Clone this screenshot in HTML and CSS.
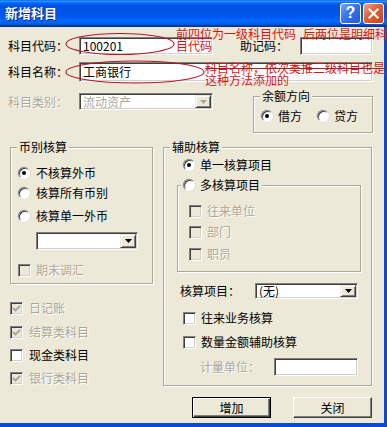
FILE: index.html
```html
<!DOCTYPE html>
<html>
<head>
<meta charset="utf-8">
<link rel="stylesheet" href="styles.css">
</head>
<body>
<div class="window">
  <div class="titlebar">
    <span class="title">新增科目</span>
    <span class="tb-btn help">?</span>
    <span class="tb-btn close"><svg width="13" height="13" viewBox="0 0 13 13"><path d="M2.5 2.5 L10.5 10.5 M10.5 2.5 L2.5 10.5" stroke="#fff" stroke-width="2.2" stroke-linecap="square"/></svg></span>
  </div>
  <div class="client">
    <div class="row r1">
      <span class="lbl">科目代码：</span>
      <span class="field f-code">100201</span>
      <span class="lbl lbl-memo">助记码：</span>
      <span class="field f-memo"></span>
    </div>
    <div class="row r2">
      <span class="lbl">科目名称：</span>
      <span class="field f-name">工商银行</span>
    </div>
    <div class="r3">
      <div class="row r3-left">
        <span class="lbl dis">科目类别：</span>
        <span class="field combo f-type"><span class="dis-plain">流动资产</span><span class="drop"><svg width="7" height="4" viewBox="0 0 7 4"><polygon points="0,0 7,0 3.5,4" fill="#ACA899"/></svg></span></span>
      </div>
      <fieldset class="group g-balance">
        <legend>余额方向</legend>
        <div class="row bal-radios">
          <span class="radio checked"></span><span class="gap5">借方</span>
          <span class="radio r-credit"></span><span class="gap5">贷方</span>
        </div>
      </fieldset>
    </div>
    <div class="main">
      <div class="col-left">
        <fieldset class="group g-currency">
          <legend>币别核算</legend>
          <div class="row opt c1"><span class="radio checked"></span><span class="gap6">不核算外币</span></div>
          <div class="row opt c2"><span class="radio"></span><span class="gap6">核算所有币别</span></div>
          <div class="row opt c3"><span class="radio"></span><span class="gap6">核算单一外币</span></div>
          <span class="field combo f-cur"><span></span><span class="drop"><svg width="7" height="4" viewBox="0 0 7 4"><polygon points="0,0 7,0 3.5,4" fill="#000"/></svg></span></span>
          <div class="row opt c4"><span class="chk off"></span><span class="dis gap5">期末调汇</span></div>
        </fieldset>
        <div class="row ck l1"><span class="chk off"><svg width="9" height="9" viewBox="0 0 9 9"><polyline points="1,4 3.5,6.5 8,2" fill="none" stroke="#A6A392" stroke-width="1.8"/></svg></span><span class="dis gap6">日记账</span></div>
        <div class="row ck l2"><span class="chk off"><svg width="9" height="9" viewBox="0 0 9 9"><polyline points="1,4 3.5,6.5 8,2" fill="none" stroke="#A6A392" stroke-width="1.8"/></svg></span><span class="dis gap6">结算类科目</span></div>
        <div class="row ck l3"><span class="chk"></span><span class="gap6">现金类科目</span></div>
        <div class="row ck l3"><span class="chk off"><svg width="9" height="9" viewBox="0 0 9 9"><polyline points="1,4 3.5,6.5 8,2" fill="none" stroke="#A6A392" stroke-width="1.8"/></svg></span><span class="dis gap6">银行类科目</span></div>
      </div>
      <div class="col-right">
        <fieldset class="group g-aux">
          <legend>辅助核算</legend>
          <div class="row opt a-single"><span class="radio checked"></span><span class="gap5">单一核算项目</span></div>
          <fieldset class="group g-multi">
            <legend><span class="radio"></span><span class="gap5">多核算项目</span></legend>
            <div class="row ck m1"><span class="chk off"></span><span class="dis gap5">往来单位</span></div>
            <div class="row ck m2"><span class="chk off"></span><span class="dis gap5">部门</span></div>
            <div class="row ck m3"><span class="chk off"></span><span class="dis gap5">职员</span></div>
          </fieldset>
          <div class="row item-row">
            <span class="lbl-item">核算项目：</span>
            <span class="field combo f-item"><span>(无)</span><span class="drop"><svg width="7" height="4" viewBox="0 0 7 4"><polygon points="0,0 7,0 3.5,4" fill="#000"/></svg></span></span>
          </div>
          <div class="row ck x1"><span class="chk"></span><span class="gap5">往来业务核算</span></div>
          <div class="row ck x2"><span class="chk"></span><span class="gap5">数量金额辅助核算</span></div>
          <div class="row unit-row">
            <span class="dis lbl-unit">计量单位：</span>
            <span class="field f-unit"></span>
          </div>
        </fieldset>
        <div class="btns">
          <span class="btn default">增加</span>
          <span class="btn">关闭</span>
        </div>
      </div>
    </div>
  </div>

  <svg class="marks" width="387" height="427" viewBox="0 0 387 427">
    <ellipse cx="120" cy="44" rx="54" ry="10.5" fill="none" stroke="#B3182A" stroke-width="1.1"/>
    <ellipse cx="135" cy="72" rx="69" ry="11" fill="none" stroke="#B3182A" stroke-width="1.1"/>
  </svg>
  <div class="annot a1"><span>前四位为一级科目代码</span><span class="sp">后两位是明细科</span><br>目代码</div>
  <div class="annot a2"><span class="strike">科目名称，依次类推三级科目也是</span><br>这种方法添加的</div>
</div>
</body>
</html>
```

FILE: styles.css
```css
* { box-sizing: border-box; }
body { margin: 0; background: #ECE9D8; }

.window {
  position: relative;
  width: 387px;
  height: 427px;
  overflow: hidden;
  background: #ECE9D8;
  display: flex;
  flex-direction: column;
  font-family: "Noto Sans CJK SC", sans-serif;
  font-size: 12px;
  line-height: 14px;
  color: #000;
}

.titlebar {
  flex: none;
  height: 27px;
  display: flex;
  align-items: center;
  padding: 0 3px 1px 5px;
  background: linear-gradient(180deg, #0058EE 0%, #3593FF 4%, #288EFF 6%, #127DFF 8%, #036FFC 10%, #0262EE 14%, #0057E5 20%, #0054E3 24%, #0055EB 56%, #005BF5 66%, #026AFE 76%, #0062EF 86%, #0052D6 92%, #0040AB 94%, #003092 100%);
}
.title {
  flex: 1;
  color: #fff;
  font-weight: bold;
  font-size: 13px;
  text-shadow: 1px 1px 0 #0a2780;
}
.tb-btn {
  width: 21px;
  height: 21px;
  margin-left: 2px;
  border: 1px solid #fff;
  border-radius: 3px;
  display: flex;
  align-items: center;
  justify-content: center;
}
.help {
  background: linear-gradient(135deg, #7AA8F8 0%, #3A78EE 40%, #1F5AD8 100%);
  color: #fff;
  font: bold 16px "Liberation Sans", sans-serif;
}
.close {
  background: linear-gradient(135deg, #F4A688 0%, #E2643A 40%, #C8421C 100%);
}

.client {
  flex: 1;
  padding-left: 8px;
  border-right: 3px solid #0A48D8;
  border-bottom: 4px solid #0A48D8;
}

.row { display: flex; align-items: center; }
.lbl { width: 71px; flex: none; white-space: nowrap; }
.dis { color: #ACA899; text-shadow: 1px 1px 0 #fff; white-space: nowrap; }
.dis-plain { color: #ACA899; }
.gap5 { margin-left: 5px; white-space: nowrap; }
.gap6 { margin-left: 6px; white-space: nowrap; }

.field {
  flex: none;
  height: 18px;
  background: #fff;
  border: 1px solid;
  border-color: #808080 #fff #fff #808080;
  box-shadow: inset 1px 1px 0 #404040, inset -1px -1px 0 #D4D0C8;
  padding-left: 3px;
  display: flex;
  align-items: center;
  white-space: nowrap;
  overflow: hidden;
}
.combo { justify-content: space-between; padding-right: 0; }
.drop {
  align-self: stretch;
  width: 16px;
  margin: 1px 1px 1px 0;
  background: #ECE9D8;
  border: 1px solid;
  border-color: #ECE9D8 #404040 #404040 #ECE9D8;
  box-shadow: inset 1px 1px 0 #fff, inset -1px -1px 0 #808080;
  display: flex;
  align-items: center;
  justify-content: center;
}

.r1 { margin-top: 10px; height: 18px; }
.f-code { width: 134px; }
.lbl-memo { width: 60px; margin-left: 27px; }
.f-memo { width: 73px; }

.r2 { margin-top: 7px; height: 20px; }
.f-name { width: 294px; height: 20px; }

.r3 { display: flex; align-items: flex-start; margin-top: 8px; }
.r3-left { margin-top: 3px; height: 17px; }
.f-type { width: 134px; height: 17px; }

.group {
  margin: 0;
  padding: 0;
  min-width: 0;
  border: 1px solid #ACA899;
  box-shadow: inset 1px 1px 0 #fff, 1px 1px 0 #fff;
}
.group legend {
  padding: 0 2px;
  height: 12px;
  line-height: 12px;
  background: #ECE9D8;
  white-space: nowrap;
}

.g-balance { margin-left: 40px; width: 120px; height: 43px; }
.g-balance legend { margin-left: 6px; }
.bal-radios { margin-top: 7px; margin-left: 7px; height: 14px; }
.r-credit { margin-left: 15px; }

.radio {
  flex: none;
  position: relative;
  width: 12px;
  height: 12px;
  border-radius: 50%;
  background: #fff;
  border: 1px solid;
  border-color: #808080 #fff #fff #808080;
  box-shadow: inset 1px 1px 0 #404040, 0 0 0 0.5px #D4D0C8;
}
.radio.checked::after {
  content: "";
  position: absolute;
  left: 3px;
  top: 3px;
  width: 4px;
  height: 4px;
  border-radius: 50%;
  background: #000;
}

.chk {
  flex: none;
  width: 13px;
  height: 13px;
  background: #fff;
  border: 1px solid;
  border-color: #808080 #fff #fff #808080;
  box-shadow: inset 1px 1px 0 #404040, inset -1px -1px 0 #D4D0C8;
  display: flex;
  align-items: center;
  justify-content: center;
}
.chk.off { background: #ECE9D8; }

.main { display: flex; margin-top: 8px; }

.col-left { width: 143px; margin-left: 2px; flex: none; display: flex; flex-direction: column; }
.g-currency { height: 143px; }
.g-currency legend { margin-left: 6px; }
.opt { height: 16px; }
.c1 { margin-top: 12px; margin-left: 7px; }
.c2 { margin-top: 4px; margin-left: 7px; }
.c3 { margin-top: 7px; margin-left: 7px; }
.f-cur { margin-top: 8px; margin-left: 25px; width: 102px; height: 18px; }
.c4 { margin-top: 12px; margin-left: 7px; }

.ck { height: 14px; }
.l1 { margin-top: 17px; }
.l2 { margin-top: 10px; }
.l3 { margin-top: 9px; }

.col-right { width: 209px; margin-left: 10px; flex: none; }
.g-aux { height: 245px; }
.g-aux > legend { margin-left: 6px; }
.a-single { margin-top: 4px; margin-left: 19px; }

.g-multi { margin-top: 5px; margin-left: 13px; width: 184px; height: 94px; }
.g-multi legend {
  display: flex;
  align-items: center;
  height: 14px;
  line-height: 14px;
  margin-left: 3px;
}
.m1 { margin-top: 12px; margin-left: 11px; }
.m2 { margin-top: 7px; margin-left: 11px; }
.m3 { margin-top: 8px; margin-left: 11px; }

.item-row { margin-top: 11px; margin-left: 16px; height: 16px; }
.lbl-item { width: 75px; white-space: nowrap; }
.f-item { width: 103px; height: 16px; }

.x1 { margin-top: 12px; margin-left: 19px; }
.x2 { margin-top: 10px; margin-left: 19px; }

.unit-row { margin-top: 9px; margin-left: 36px; height: 18px; }
.lbl-unit { width: 74px; }
.f-unit { width: 84px; height: 18px; }

.btns { display: flex; gap: 22px; margin-top: 11px; margin-left: 29px; }
.btn {
  width: 79px;
  height: 21px;
  display: flex;
  align-items: center;
  justify-content: center;
  background: #ECE9D8;
  border: 1px solid;
  border-color: #fff #404040 #404040 #fff;
  box-shadow: inset -1px -1px 0 #808080;
}
.btn.default {
  border-color: #000;
  box-shadow: inset 1px 1px 0 #fff, inset -1px -1px 0 #404040, inset -2px -2px 0 #808080;
}

.marks { position: absolute; left: 0; top: 0; pointer-events: none; }
.annot {
  position: absolute;
  color: #DA1414;
  font-size: 12px;
  line-height: 12px;
  white-space: nowrap;
}
.a1 { left: 176px; top: 28px; }
.a1 .sp { margin-left: 7px; }
.a2 { left: 205px; top: 62px; line-height: 11.5px; }
.strike { text-decoration: line-through; text-decoration-color: #A02028; }
```
